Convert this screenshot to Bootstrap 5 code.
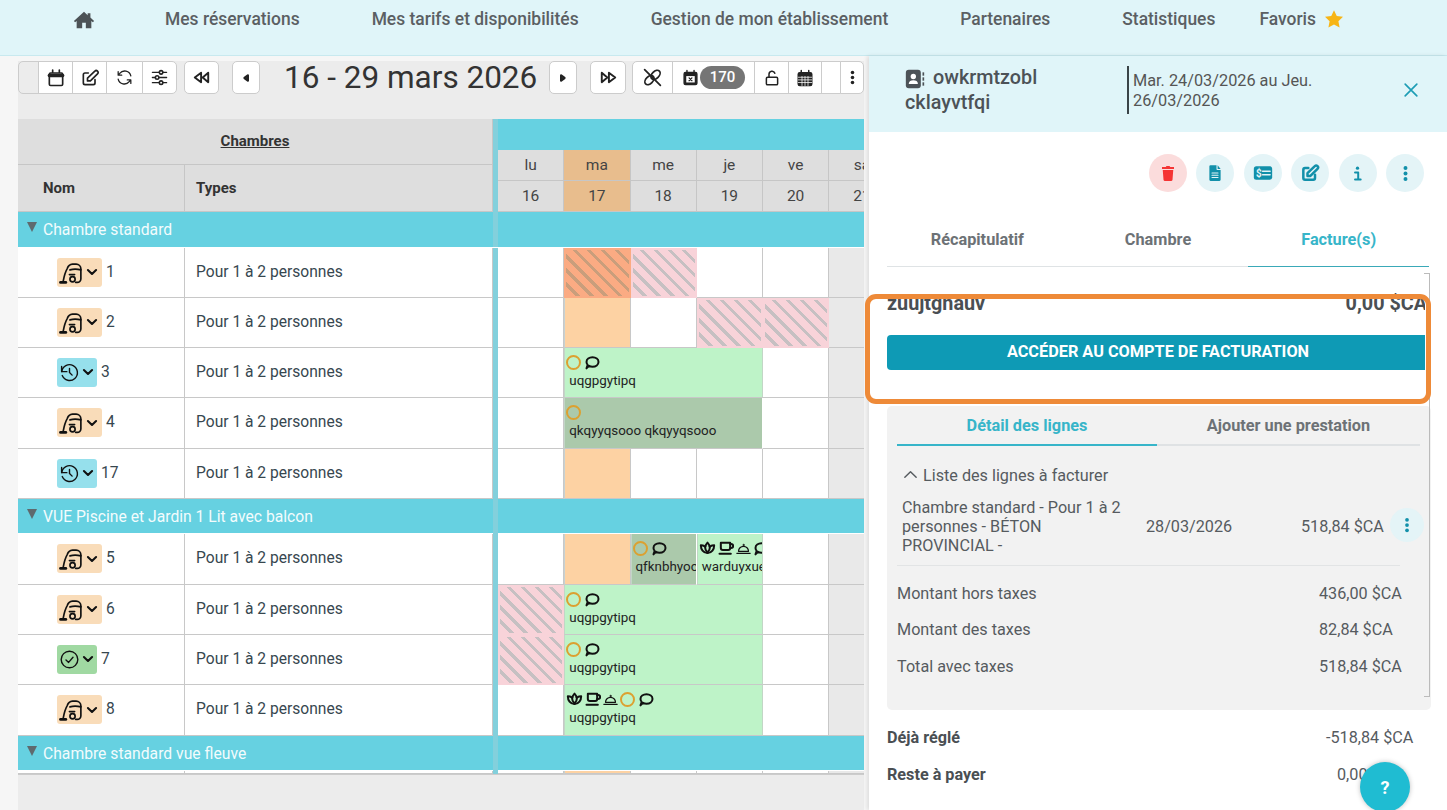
<!DOCTYPE html>
<html lang="fr">
<head>
    <meta charset="UTF-8">
    <meta name="viewport" content="width=device-width, initial-scale=1.0">
    <title>Planning</title>
    <link rel="stylesheet" href="https://cdn.jsdelivr.net/npm/bootstrap@5.3.0/dist/css/bootstrap.min.css">
    <style>
        html, body { height: 810px; overflow: hidden; }
        body { font-family: Roboto, "Liberation Sans", sans-serif; background: #f6f6f6; color: #2f4550; }
        .ico { display: inline-block; fill: none; stroke: currentColor; stroke-width: 2; stroke-linecap: round; stroke-linejoin: round; flex: none; }
        .ico.sw-16 { stroke-width: 1.6; }
        .ico.sw-24 { stroke-width: 2.4; }
        .ico.sw-3 { stroke-width: 3; }
        .ico.sw-35 { stroke-width: 3.5; }

        .top-nav { height: 56px; background: #e0f5f9; border-bottom: 1px solid #c8e9ef; padding: 8px 0 0 73px; gap: 72px; }
        .top-nav a { color: #5b5f63; font-size: 17.45px; font-weight: 500; text-decoration: none; line-height: 22px; white-space: nowrap; }
        .top-nav a.home-link { margin-right: -2px; color: #4c5256; }
        .top-nav a.fav-link { margin-left: -28px; }

        .plan-side { width: 869px; height: 754px; padding: 5px 5px 0 18px; background: #f6f6f6; }
        .plan-bg { background: #ececec; height: 100%; }
        .tool-bar { height: 58px; white-space: nowrap; }
        .tool-bar .btn { height: 33px; padding: 0; background: #fff; border-color: #ccc; color: #222; display: inline-flex; align-items: center; justify-content: center; border-radius: 5px; }
        .tool-bar .btn.tb-blank { background: #ececec; }
        .date-title { font-size: 31.5px; line-height: 33px; color: #333; font-weight: 400; margin: 0 13px 0 24px; width: 252px; white-space: nowrap; }
        .count-pill { background: #757575; color: #fff; border-radius: 12px; font-size: 15px; font-weight: 500; padding: 0 10px; line-height: 23px; margin-left: 1px; }

        .plan-grid { width: 846px; overflow: hidden; border-bottom: 1px solid #ccc; }
        .plan-row { display: grid; grid-template-columns: 167px 308px 5px repeat(6, 66.25px); }
        .plan-head { grid-template-rows: 31px 15px 16px 31px; }
        .head-cell { background: #dedede; border-right: 1px solid #c6c6c6; border-bottom: 1px solid #c6c6c6; display: flex; align-items: center; color: #333; font-weight: 700; font-size: 15px; }
        .head-cell.nom-cell { padding-left: 25px; }
        .head-cell.types-cell { padding-left: 11px; }
        .sep-bar { background: #83d0dc; }
        .teal-fill { background: #66d1e1; }
        .day-head { background: #dedede; border-right: 1px solid #c6c6c6; border-bottom: 1px solid #c6c6c6; text-align: center; color: #444; font-size: 15.5px; line-height: 30px; }
        .day-head.is-today { background: #e8bd8d; }
        .group-row { height: 35px; background: #66d1e1; color: #f3fcfd; font-size: 15.7px; line-height: 35px; border-bottom: 1px solid #fff; }
        .group-row.is-first { height: 36px; }
        .group-label { grid-column: span 2; white-space: nowrap; padding-left: 9px; }
        .group-tri { display: inline-block; width: 0; height: 0; border-left: 5.5px solid transparent; border-right: 5.5px solid transparent; border-top: 10px solid #5e6a6e; margin-right: 6px; vertical-align: 3px; }
        .room-cell { background: #fff; border-right: 1px solid #c8c8c8; border-bottom: 1px solid #c8c8c8; display: flex; align-items: center; font-size: 15.6px; color: #37474f; }
        .room-cell.name-cell { padding-left: 39px; gap: 4px; }
        .room-cell.type-cell { padding-left: 11px; }
        .state-chip { height: 29px; border-radius: 3px; display: inline-flex; align-items: center; padding-left: 2px; color: #111; gap: 1px; margin-top: -1px; }
        .chip-clean { background: #f9dcb9; width: 45px; }
        .chip-wait { background: #96e0ec; width: 40px; }
        .chip-ok { background: #a0d9a2; width: 40px; }
        .day-cell { background: #fff; border-right: 1px solid #c8c8c8; border-bottom: 1px solid #c8c8c8; min-width: 0; }
        .day-cell.is-sat { background: #e9e9e9; }
        .day-cell.is-free { background: #fdd2a3; border-left: 1px solid #c8d2d2; }
        .hatch-pink { border: 2px solid #f8d3d9; background: repeating-linear-gradient(45deg, #f8d3d9 0 6.8px, #c6c0c2 6.8px 10px); }
        .hatch-orange { border: 2px solid #fbab83; background: repeating-linear-gradient(45deg, #fbab83 0 6.8px, #c99e7c 6.8px 10px); }
        .resa { overflow: hidden; border-bottom: 1px solid #c8c8c8; padding: 6px 0 0 1px; font-size: 13.4px; line-height: 18px; color: #222; white-space: nowrap; }
        .resa-green { background: #bef3c8; border-right: 1px solid #c2d6c6; border-left: 1px solid #c2d6c6; }
        .resa-dark { background: #abc9ab; border-right: 1px solid #fff; border-left: 1px solid #c2d6c6; }
        .resa-icons { display: flex; align-items: center; gap: 1px; height: 16px; margin-bottom: 2px; color: #111; }
        .resa-name { padding-left: 3px; }
        .ring { width: 15px; height: 15px; border: 2px solid #dca030; border-radius: 50%; flex: none; margin-right: 2px; }
        .fade-end { height: 3px; }

        .fiche { width: 578px; height: 754px; background: #fff; box-shadow: -2px 0 4px rgba(0,0,0,.1); position: relative; }
        .fiche-top { height: 76px; background: #e0f5f9; padding: 8px 20px 0 36px; }
        .fiche-name { width: 222px; font-size: 19.8px; font-weight: 500; line-height: 24.5px; color: #4c5257; padding-top: 2px; }
        .fiche-date { border-left: 2px solid #3a4448; height: 48px; width: 270px; padding-left: 4px; font-size: 16.3px; line-height: 19.5px; color: #555; padding-top: 5px; margin-top: 2px; }
        .close-x { color: #1d9db5; margin-left: auto; margin-top: 16px; margin-right: 6px; }
        .round-actions { padding: 22px 23px 0 0; gap: 9.4px; }
        .round-btn { width: 38px; height: 38px; border-radius: 50%; background: #e4f4f7; color: #1290aa; display: flex; align-items: center; justify-content: center; border: 0; padding: 0; }
        .round-btn.is-danger { background: #fbdcdc; color: #f53434; }
        .ico.solid { fill: currentColor; stroke: none; }
        .fiche-tabs { margin: 30px 18px 0 18px; width: 542px; height: 45px; border-bottom: 1px solid #dfe3e5; }
        .fiche-tabs .nav-link, .line-tabs .nav-link { color: #6d7276; font-weight: 700; font-size: 16.3px; padding: 8px 0 16px; line-height: 20px; border: 0; background: none; }
        .fiche-tabs .nav-link.active { color: #37b5c9; border-bottom: 1px solid #3aa9b8; margin-bottom: -1px; }
        .fiche-body { padding: 0 0 0 18px; position: relative; }
        .clip-box { width: 538px; overflow: hidden; padding-top: 26px; height: 103px; }
        .owner-row { width: 560px; padding-right: 20px; font-size: 19.8px; font-weight: 700; color: #4a4f53; line-height: 22px; height: 42px; }
        .open-btn { display: block; height: 35px; width: 542px; background: #0e9ab5; color: #fff; font-weight: 700; font-size: 16.3px; text-transform: uppercase; border: 0; border-radius: 4px; padding: 0; }
        .lines-panel { width: 544px; height: 304px; margin-top: 36px; background: #f2f2f2; border-radius: 5px; padding: 0 10px; font-size: 16.2px; line-height: 19px; color: #565b5f; }
        .line-tabs { width: 523px; border-bottom: 2px solid #dfe2e4; }
        .line-tabs .nav-item:first-child { flex: 0 0 260px; }
        .line-tabs .nav-link { padding: 10px 0 8px; }
        .line-tabs .nav-link.active { color: #37b5c9; border-bottom: 2px solid #37b5c9; margin-bottom: -2px; }
        .list-head { padding: 20px 0 0 5px; height: 50px; gap: 4px; }
        .bill-line { padding: 0 0 8px 5px; height: 70px; width: 503px; border-bottom: 1px solid #e2e4e5; position: relative; }
        .bill-label { width: 226px; margin-right: 18px; }
        .bill-date { width: 155px; }
        .kebab-sm { position: absolute; left: 493px; top: 12px; width: 34px; height: 34px; border-radius: 50%; background: #e4f4f7; color: #1290aa; display: flex; align-items: center; justify-content: center; }
        .sum-row { height: 36.6px; display: flex; align-items: center; }
        .sum-row span:first-child { width: 422px; }
        .sum-list { padding-top: 9px; }
        .pay-row { font-size: 16.2px; color: #565b5f; height: 37px; line-height: 37px; display: flex; width: 560px; white-space: nowrap; }
        .pay-row b { color: #4a4f53; width: 439px; font-weight: 700; }
        .pay-row b.is-rest { width: 450px; }
        .pay-list { padding-top: 9px; }
        .orange-box { position: absolute; left: -4px; top: 238px; width: 566px; height: 110px; border: 5px solid #ee8a38; border-radius: 11px; }
        .frame-line { position: absolute; left: 555px; top: 217px; width: 6px; height: 424px; border-top: 1px solid #bbb; border-right: 1px solid #bbb; border-bottom: 1px solid #bbb; }
        .help-btn { position: absolute; left: 491px; top: 706px; width: 50px; height: 50px; border-radius: 50%; border: 0; background: #1fbcd2; color: #fff; font-weight: 700; font-size: 18px; box-shadow: 0 0 5px rgba(0,0,0,.25); padding: 0; }
        .w-21 { width: 21px; } .w-20 { width: 20px; } .w-24 { width: 24px; } .w-28 { width: 28px; } .w-34 { width: 34px; } .w-35 { width: 35px; } .w-36 { width: 36px; } .w-37 { width: 37px; } .w-41 { width: 41px; } .w-83 { width: 83px; }
        .gap-13 { margin-left: 13px; }
        .gap-7 { margin-left: 7px; }
        .gap-6 { margin-left: 6px; }
    </style>
</head>
<body>
    <!-- icon sprite -->
    <svg width="0" height="0" class="position-absolute">
        <symbol id="i-home" viewBox="0 0 24 24"><path d="M12 3 1 13l1.3 1.4L4 13v8h6v-6h4v6h6v-8l1.700 1.400L23 13l-4-3.600V4.500h-3v2.400z"/></symbol>
        <symbol id="i-cal" viewBox="0 0 24 24"><rect x="4" y="6" width="16" height="15" rx="1.500"/><path d="M4 9h16" stroke-width="4"/><path d="M8 2.500V5M16 2.500V5"/></symbol>
        <symbol id="i-edit" viewBox="0 0 24 24"><path d="M10 6H6a2 2 0 0 0-2 2v10a2 2 0 0 0 2 2h10a2 2 0 0 0 2-2v-4"/><path d="M9 15.500h3.500L21 7a2.200 2.200 0 0 0-3.200-3.200L9 12.200z"/></symbol>
        <symbol id="i-sync" viewBox="0 0 24 24"><path d="M20 10A8 8 0 0 0 6 6.800L4 9M4 4.500V9h4.500M4 14a8 8 0 0 0 14 3.200L20 15M20 19.500V15h-4.500"/></symbol>
        <symbol id="i-sliders" viewBox="0 0 24 24"><path d="M3 5.500h18M3 12h18M3 18.500h18" stroke-width="1.600"/><circle cx="14" cy="5.500" r="2.200" fill="#fff"/><circle cx="9" cy="12" r="2.200" fill="#fff"/><circle cx="14" cy="18.500" r="2.200" fill="#fff"/></symbol>
        <symbol id="i-back" viewBox="0 0 24 24"><path d="M11.500 6 3.500 12l8 6zM20.500 6l-7 6 7 6z"/></symbol>
        <symbol id="i-fwd" viewBox="0 0 24 24"><path d="M3.500 6l7 6-7 6zM12.500 6l8 6-8 6z"/></symbol>
        <symbol id="i-prev" viewBox="0 0 24 24"><path d="M14.500 8.500l-4.500 3.500 4.500 3.500z"/></symbol>
        <symbol id="i-next" viewBox="0 0 24 24"><path d="M9.500 8.500l4.500 3.500-4.500 3.500z"/></symbol>
        <symbol id="i-unlink" viewBox="0 0 24 24"><ellipse cx="8.500" cy="15" rx="6.200" ry="4" transform="rotate(-45 8.500 15)"/><ellipse cx="15.500" cy="9" rx="6.200" ry="4" transform="rotate(-45 15.500 9)"/><path d="M3 3l18 18"/></symbol>
        <symbol id="i-calx" viewBox="0 0 24 24"><rect x="3" y="5" width="18" height="17" rx="2" fill="currentColor"/><path d="M7 2v3M17 2v3"/><rect x="6" y="10" width="12" height="9" fill="#fff" stroke="none"/><path d="M10 12.500l4 4M14 12.500l-4 4" stroke-width="1.800"/></symbol>
        <symbol id="i-lock" viewBox="0 0 24 24"><rect x="4.500" y="11" width="15" height="10" rx="1.500"/><path d="M8 11V7a4 4 0 0 1 7.800-1.200"/></symbol>
        <symbol id="i-calfull" viewBox="0 0 24 24"><rect x="3" y="5" width="18" height="17" rx="2" fill="currentColor"/><path d="M7 2v3M17 2v3"/><path d="M3 11h18M3 14.500h18M3 18h18M8 10v12M12 10v12M16 10v12" stroke="#fff" stroke-width="1"/></symbol>
        <symbol id="i-dots" viewBox="0 0 24 24"><circle cx="12" cy="5" r="2.500"/><circle cx="12" cy="12" r="2.500"/><circle cx="12" cy="19" r="2.500"/></symbol>
        <symbol id="i-book" viewBox="0 0 24 24"><rect x="1" y="1" width="18" height="22" rx="3.500"/><circle cx="10" cy="9" r="3.200" fill="#fff"/><path d="M4.500 18c0-3.200 2.500-4.500 5.500-4.500s5.500 1.300 5.500 4.500z" fill="#fff"/><rect x="21" y="4" width="2" height="4"/><rect x="21" y="10" width="2" height="4"/><rect x="21" y="16" width="2" height="4"/></symbol>
        <symbol id="i-trash" viewBox="0 0 24 24"><path d="M5 8h14l-1 13a1.500 1.500 0 0 1-1.500 1.500h-9A1.500 1.500 0 0 1 6 21z"/><path d="M4 4h5l1-1.500h4L15 4h5v2.500H4z"/></symbol>
        <symbol id="i-file" viewBox="0 0 24 24"><path d="M6 1.500h8V7a1 1 0 0 0 1 1h4.500v13a1.500 1.500 0 0 1-1.500 1.500H6A1.500 1.500 0 0 1 4.500 21V3A1.500 1.500 0 0 1 6 1.500z"/><path d="M15.500 1.500l4 5h-4z"/><path d="M8 12h8M8 15h8M8 18h8" stroke="#e4f4f7" stroke-width="1.500"/></symbol>
        <symbol id="i-cheque" viewBox="0 0 24 24"><rect x="1" y="4" width="22" height="16" rx="3"/><text x="3.500" y="16.500" font-size="12" font-weight="700" fill="#e4f4f7" font-family="Roboto, sans-serif">$</text><path d="M11.500 10h9M11.500 14h9" stroke="#e4f4f7" stroke-width="1.800"/></symbol>
        <symbol id="i-info" viewBox="0 0 24 24"><circle cx="12" cy="4.500" r="2.300" fill="currentColor" stroke="none"/><path d="M8.500 10.500H13V20M8.500 20.500h8" stroke-width="2.800"/></symbol>
        <symbol id="i-vac" viewBox="0 0 24 24"><path d="M1.500 21.500h5" stroke-width="2.800"/><path d="M4 20.500C5 15 6.500 10.500 8 8a6 6 0 0 1 5-4h3.500A4.500 4.500 0 0 1 21 8.500v9.500a3.500 3.500 0 0 1-3.500 3.500H16"/><path d="M10.500 9.500c3-1 7-1 10.500 0M10 14h5"/><circle cx="13" cy="18.500" r="2.500"/></symbol>
        <symbol id="i-hist" viewBox="0 0 24 24"><path d="M12 7.500V12l3 3"/><path d="M3.100 11a9 9 0 1 1 .6 4.500"/><path d="M3 5v6h6"/></symbol>
        <symbol id="i-check" viewBox="0 0 24 24"><circle cx="12" cy="12" r="9.500"/><path d="M8 12.500l3 2.800 5-5.800"/></symbol>
        <symbol id="i-chev" viewBox="0 0 24 24"><path d="M5 8.500l7 7 7-7"/></symbol>
        <symbol id="i-up" viewBox="0 0 24 24"><path d="M4 16l8-8 8 8"/></symbol>
        <symbol id="i-msg" viewBox="0 0 24 24"><path d="M3 21.500l1.800-5.200C3.600 15 3 13.500 3 12c0-4 4-7 9-7s9 3 9 7-4 7-9 7c-1.900 0-3.700-.4-5.100-1.200z"/></symbol>
        <symbol id="i-lotus" viewBox="0 0 24 24"><path d="M12 4c2.500 2.500 3.500 5 3.500 7.500 0 2.500-1.500 5-3.500 7.500-2-2.500-3.500-5-3.500-7.500C8.500 9 9.500 6.500 12 4z"/><path d="M8.500 10C6 8.500 4 8 2 8c0 6 3.500 11.500 10 11.500"/><path d="M15.500 10c2.500-1.500 4.500-2 6.500-2 0 6-3.500 11.500-10 11.500"/></symbol>
        <symbol id="i-cup" viewBox="0 0 24 24"><path d="M5 4h14v8a3 3 0 0 1-3 3H8a3 3 0 0 1-3-3z"/><path d="M19 6h1.500a2 2 0 0 1 0 6H19"/><path d="M3 20.500h17"/></symbol>
        <symbol id="i-cloche" viewBox="0 0 24 24"><path d="M2 20h20" stroke-width="1.800"/><path d="M4.500 17a7.500 7.500 0 0 1 15 0z" stroke-width="1.800"/><circle cx="12" cy="7.500" r="1" stroke-width="1.400"/></symbol>
        <symbol id="i-x" viewBox="0 0 24 24"><path d="M5 5l14 14M19 5 5 19"/></symbol>
    </svg>

    <!-- menu du haut -->
    <nav class="top-nav d-flex align-items-start">
        <a href="#" class="home-link"><svg class="ico solid" width="22" height="22"><use href="#i-home"/></svg></a>
        <a href="#">Mes réservations</a>
        <a href="#">Mes tarifs et disponibilités</a>
        <a href="#">Gestion de mon établissement</a>
        <a href="#">Partenaires</a>
        <a href="#">Statistiques</a>
        <a href="#" class="fav-link d-flex align-items-center">Favoris <svg class="ms-2" width="20" height="20" viewBox="0 0 24 24"><path fill="#f7b516" d="M12 1.500l3.300 6.900 7.500 1-5.500 5.200 1.400 7.500L12 18.500l-6.700 3.600 1.400-7.500L1.200 9.400l7.500-1z"/></svg></a>
    </nav>

    <div class="d-flex">
        <!-- planning -->
        <div class="plan-side">
            <div class="plan-bg">
                <div class="tool-bar d-flex align-items-start">
                    <div class="btn-group">
                        <button class="btn tb-blank w-21"></button>
                        <button class="btn w-35"><svg class="ico" width="20" height="20"><use href="#i-cal"/></svg></button>
                        <button class="btn w-35"><svg class="ico" width="20" height="20"><use href="#i-edit"/></svg></button>
                        <button class="btn w-37"><svg class="ico sw-16" width="19" height="19"><use href="#i-sync"/></svg></button>
                        <button class="btn w-35"><svg class="ico" width="19" height="19"><use href="#i-sliders"/></svg></button>
                    </div>
                    <button class="btn w-35 gap-7"><svg class="ico sw-24" width="19" height="19"><use href="#i-back"/></svg></button>
                    <button class="btn w-28 gap-13"><svg class="ico sw-3" width="18" height="18"><use href="#i-prev"/></svg></button>
                    <div class="date-title">16 - 29 mars 2026</div>
                    <button class="btn w-28"><svg class="ico sw-3" width="18" height="18"><use href="#i-next"/></svg></button>
                    <button class="btn w-36 gap-13"><svg class="ico sw-24" width="19" height="19"><use href="#i-fwd"/></svg></button>
                    <div class="btn-group gap-6">
                        <button class="btn w-41"><svg class="ico" width="21" height="21"><use href="#i-unlink"/></svg></button>
                        <button class="btn w-83"><svg class="ico" width="17" height="17"><use href="#i-calx"/></svg><span class="count-pill">170</span></button>
                        <button class="btn w-35"><svg class="ico" width="18" height="18"><use href="#i-lock"/></svg></button>
                        <button class="btn w-34"><svg class="ico" width="18" height="18"><use href="#i-calfull"/></svg></button>
                        <button class="btn w-20"></button>
                        <button class="btn w-24"><svg class="ico solid" width="17" height="17"><use href="#i-dots"/></svg></button>
                    </div>
                </div>
                <div class="plan-grid" id="planGrid"></div>
            </div>
        </div>

        <!-- fiche reservation -->
        <aside class="fiche">
            <div class="fiche-top d-flex">
                <div class="fiche-name"><svg class="ico solid me-2" width="20" height="20"><use href="#i-book"/></svg>owkrmtzobl cklayvtfqi</div>
                <div class="fiche-date">Mar. 24/03/2026 au Jeu. 26/03/2026</div>
                <svg class="ico close-x" width="20" height="20"><use href="#i-x"/></svg>
            </div>
            <div class="round-actions d-flex justify-content-end">
                <button class="round-btn is-danger"><svg class="ico solid" width="18" height="18"><use href="#i-trash"/></svg></button>
                <button class="round-btn"><svg class="ico solid" width="18" height="18"><use href="#i-file"/></svg></button>
                <button class="round-btn"><svg class="ico solid" width="20" height="20"><use href="#i-cheque"/></svg></button>
                <button class="round-btn"><svg class="ico sw-3" width="20" height="20"><use href="#i-edit"/></svg></button>
                <button class="round-btn"><svg class="ico" width="17" height="17"><use href="#i-info"/></svg></button>
                <button class="round-btn"><svg class="ico solid" width="19" height="19"><use href="#i-dots"/></svg></button>
            </div>
            <ul class="nav nav-justified fiche-tabs">
                <li class="nav-item"><a class="nav-link" href="#">Récapitulatif</a></li>
                <li class="nav-item"><a class="nav-link" href="#">Chambre</a></li>
                <li class="nav-item"><a class="nav-link active" href="#">Facture(s)</a></li>
            </ul>
            <div class="fiche-body">
                <div class="clip-box">
                    <div class="owner-row d-flex justify-content-between"><span>zuujtgnauv</span><span>0,00 $CA</span></div>
                    <button class="open-btn">Accéder au compte de facturation</button>
                </div>
                <div class="lines-panel">
                    <ul class="nav nav-justified line-tabs">
                        <li class="nav-item"><a class="nav-link active" href="#">Détail des lignes</a></li>
                        <li class="nav-item"><a class="nav-link" href="#">Ajouter une prestation</a></li>
                    </ul>
                    <div class="list-head d-flex"><svg class="ico" width="17" height="17"><use href="#i-up"/></svg><span>Liste des lignes à facturer</span></div>
                    <div class="bill-line d-flex align-items-center">
                        <div class="bill-label">Chambre standard - Pour 1 à 2 personnes - BÉTON PROVINCIAL -</div>
                        <div class="bill-date">28/03/2026</div>
                        <div>518,84 $CA</div>
                        <span class="kebab-sm"><svg class="ico solid" width="18" height="18"><use href="#i-dots"/></svg></span>
                    </div>
                    <div class="sum-list">
                        <div class="sum-row"><span>Montant hors taxes</span><span>436,00 $CA</span></div>
                        <div class="sum-row"><span>Montant des taxes</span><span>82,84 $CA</span></div>
                        <div class="sum-row"><span>Total avec taxes</span><span>518,84 $CA</span></div>
                    </div>
                </div>
                <div class="pay-list">
                    <div class="pay-row"><b>Déjà réglé</b><span>-518,84 $CA</span></div>
                    <div class="pay-row"><b class="is-rest">Reste à payer</b><span>0,00 $CA</span></div>
                </div>
            </div>
            <div class="frame-line"></div>
            <div class="orange-box"></div>
            <button class="help-btn">?</button>
        </aside>
    </div>

    <script>
        // planning data: each room lists what sits on the day columns
        const free = { cls: "day-cell is-free" };
        const pink = { cls: "hatch-pink" };
        const orangeHatch = { cls: "hatch-orange" };
        const ic = n => `<svg class="ico sw-3" width="17" height="16"><use href="#i-${n}"/></svg>`;
        const ring = '<span class="ring"></span>';
        const green = (name, icons, span) => ({ resa: "resa-green", name, icons, span });
        const dark = (name, icons, span) => ({ resa: "resa-dark", name, icons, span });

        const rooms = [
            { group: "Chambre standard", first: true },
            { n: 1, st: "clean", h: 50, days: [null, orangeHatch, pink] },
            { n: 2, st: "clean", h: 50, days: [null, free, null, pink, pink] },
            { n: 3, st: "wait", h: 50, days: [null, green("uqgpgytipq", ring + ic("msg"), 3)] },
            { n: 4, st: "clean", h: 51, days: [null, dark("qkqyyqsooo qkqyyqsooo", ring, 3)] },
            { n: 17, st: "wait", h: 50, days: [null, free] },
            { group: "VUE Piscine et Jardin 1 Lit avec balcon" },
            { n: 5, st: "clean", h: 51, days: [null, free, dark("qfknbhyoc", ring + ic("msg"), 1), green("warduyxue", ic("lotus") + ic("cup") + ic("cloche") + ic("msg"), 1)] },
            { n: 6, st: "clean", h: 50, days: [pink, green("uqgpgytipq", ring + ic("msg"), 3)] },
            { n: 7, st: "ok", h: 50, days: [pink, green("uqgpgytipq", ring + ic("msg"), 3)] },
            { n: 8, st: "clean", h: 51, days: [null, green("uqgpgytipq", ic("lotus") + ic("cup") + ic("cloche") + ring + ic("msg"), 3)] },
            { group: "Chambre standard vue fleuve" }
        ];
        const chips = {
            clean: ["chip-clean", "vac", 25],
            wait: ["chip-wait", "hist", 21],
            ok: ["chip-ok", "check", 21]
        };

        function dayCells(days) {
            let html = "", col = 0;
            days.forEach(d => {
                if (!d) { html += `<div class="day-cell"></div>`; col++; return; }
                if (d.resa) {
                    html += `<div class="resa ${d.resa}" style="grid-column:span ${d.span}"><div class="resa-icons">${d.icons}</div><div class="resa-name">${d.name}</div></div>`;
                    col += d.span;
                    return;
                }
                html += `<div class="${d.cls}"></div>`;
                col++;
            });
            for (; col < 6; col++) {
                html += `<div class="day-cell${col === 5 ? " is-sat" : ""}"></div>`;
            }
            return html;
        }

        // head of the grid: left block spans two lines, days span the others
        const dayHeads = (list, row) => list.map((d, i) =>
            `<div class="day-head${i === 1 ? " is-today" : ""}" style="grid-row:${row};grid-column:${i + 4}">${d}</div>`).join("");
        let grid = `
            <div class="plan-row plan-head">
                <div class="head-cell justify-content-center text-decoration-underline" style="grid-row:1/3;grid-column:1/3">Chambres</div>
                <div class="head-cell nom-cell" style="grid-row:3/5;grid-column:1">Nom</div>
                <div class="head-cell types-cell" style="grid-row:3/5;grid-column:2">Types</div>
                <div class="sep-bar" style="grid-row:1/5;grid-column:3"></div>
                <div class="teal-fill" style="grid-row:1;grid-column:4/10"></div>
                ${dayHeads(["lu","ma","me","je","ve","sa"], "2/4")}
                ${dayHeads([16,17,18,19,20,21], "4")}
            </div>`;
        rooms.forEach(r => {
            if (r.group) {
                grid += `<div class="plan-row group-row${r.first ? " is-first" : ""}"><div class="group-label"><span class="group-tri"></span>${r.group}</div><div class="sep-bar"></div></div>`;
                return;
            }
            const c = chips[r.st];
            grid += `<div class="plan-row" style="height:${r.h}px">
                <div class="room-cell name-cell"><span class="state-chip ${c[0]}"><svg class="ico sw-16" width="${c[2]}" height="${c[2]}"><use href="#i-${c[1]}"/></svg><svg class="ico sw-35" width="14" height="14"><use href="#i-chev"/></svg></span>${r.n}</div>
                <div class="room-cell type-cell">Pour 1 à 2 personnes</div>
                <div class="sep-bar"></div>
                ${dayCells(r.days)}
            </div>`;
        });
        grid += `<div class="plan-row fade-end">
            <div class="room-cell"></div><div class="room-cell"></div><div class="sep-bar"></div>
            ${dayCells([null, free])}
        </div>`;
        document.getElementById("planGrid").innerHTML = grid;
    </script>
    <script src="https://cdn.jsdelivr.net/npm/bootstrap@5.3.0/dist/js/bootstrap.bundle.min.js"></script>
</body>
</html>
